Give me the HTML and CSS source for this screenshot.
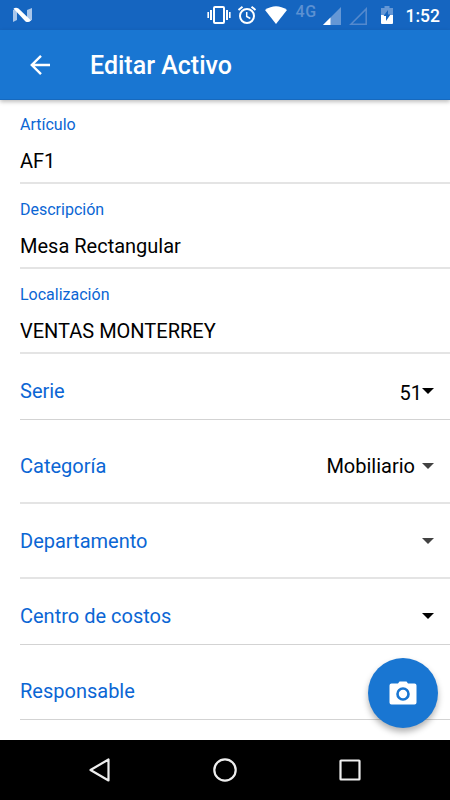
FILE: index.html
```
<!DOCTYPE html>
<html lang="es">
<head>
  <meta charset="UTF-8">
  <meta name="viewport" content="width=device-width, initial-scale=1.0">
  <title>Editar Activo</title>
  <link rel="stylesheet" href="styles.css">
</head>
<body>
  <div class="screen">
    <div class="status-bar">
      <svg class="logo-n" width="20" height="16" viewBox="0 0 20 16">
        <path d="M1 3l4-2v12l-4 2zM15 3l5-2v12l-5 2z" fill="#a9c6ea"/>
        <path d="M1.500 1.500Q4 0 6.500 1.500L19 13.500Q16.500 16 13.500 14.500z" fill="#fff"/>
      </svg>
      <div class="status-icons">
        <svg width="24" height="20" viewBox="0 0 24 20" fill="none" stroke="#fff">
          <rect x="7" y="2" width="10" height="16" rx="1" stroke-width="2"/>
          <path d="M4 5v10M20 5v10" stroke-width="2"/>
          <path d="M1.200 7v6M22.800 7v6" stroke-width="1.600"/>
        </svg>
        <svg class="alarm" width="20" height="20" viewBox="0 0 20 20" fill="none" stroke="#fff">
          <circle cx="10" cy="11" r="7" stroke-width="2"/>
          <path d="M1.500 5L5.500 1.800M18.500 5l-4-3.200" stroke-width="2"/>
          <path d="M9.700 7v4.500l3.600 2" stroke-width="1.500"/>
        </svg>
        <svg class="wifi" width="24" height="20" viewBox="0 0 24 20">
          <path d="M1 5Q12-2.500 23 5L12 19z" fill="#fff"/>
        </svg>
        <span class="network">4G</span>
        <svg class="signal" width="18" height="18" viewBox="0 0 18 18">
          <path d="M0 18L18 0v18z" fill="#6597d5"/>
          <path d="M0 18l7.500-7.500V18z" fill="#fff"/>
        </svg>
        <svg class="signal-empty" width="18" height="18" viewBox="0 0 18 18">
          <path d="M1.900 17.200L17.200 1.900v15.300z" fill="none" stroke="#5489cd" stroke-width="1.600"/>
        </svg>
        <svg class="battery" width="12" height="18" viewBox="0 0 12 18">
          <path d="M0 2h3.500V0h5v2H12v8H0z" fill="#6597d5"/>
          <path d="M0 9h12v8q0 1-1 1H1q-1 0-1-1z" fill="#fff"/>
          <path d="M7 4v4.500h2.500L5 15v-5H2.500z" fill="#1565c0"/>
        </svg>
        <span class="clock">1:52</span>
      </div>
    </div>

    <header class="app-bar">
      <svg class="back" width="20" height="20" viewBox="0 0 20 20" fill="none" stroke="#fff" stroke-width="2.400">
        <path d="M20 10H2M11 .9L1.800 10l9.200 9.100"/>
      </svg>
      <h1>Editar Activo</h1>
    </header>

    <main class="form">
      <div class="field first">
        <label>Artículo</label>
        <div class="value">AF1</div>
      </div>
      <div class="field">
        <label>Descripción</label>
        <div class="value">Mesa Rectangular</div>
      </div>
      <div class="field">
        <label>Localización</label>
        <div class="value">VENTAS MONTERREY</div>
      </div>
      <div class="select-row serie">
        <span class="select-label">Serie</span>
        <span class="select-value">51</span>
        <span class="caret"></span>
      </div>
      <div class="select-row categoria">
        <span class="select-label">Categoría</span>
        <span class="select-value">Mobiliario</span>
        <span class="caret gray"></span>
      </div>
      <div class="select-row departamento">
        <span class="select-label">Departamento</span>
        <span class="caret gray"></span>
      </div>
      <div class="select-row costos">
        <span class="select-label">Centro de costos</span>
        <span class="caret"></span>
      </div>
      <div class="select-row responsable">
        <span class="select-label">Responsable</span>
      </div>
    </main>

    <button class="fab" aria-label="Tomar foto">
      <svg width="28" height="24" viewBox="0 0 28 24">
        <path d="M2.500 2.500H9L10.500.5h7L19 2.500h6.500q2 0 2 2v17q0 2-2 2h-23q-2 0-2-2v-17q0-2 2-2z" fill="#fff"/>
        <circle cx="14" cy="13" r="5.500" fill="#fff" stroke="#1976d2" stroke-width="2.600"/>
      </svg>
    </button>

    <nav class="nav-bar">
      <svg width="24" height="26" viewBox="0 0 24 26">
        <path d="M20.500 2.500v21L2.500 13z"/>
      </svg>
      <svg width="24" height="26" viewBox="0 0 24 26">
        <circle cx="12" cy="13" r="10.700"/>
      </svg>
      <svg width="24" height="26" viewBox="0 0 24 26">
        <rect x="2.500" y="3.500" width="19" height="19" rx=".5"/>
      </svg>
    </nav>
  </div>
</body>
</html>
```

FILE: styles.css
```
* {
  margin: 0;
  padding: 0;
  box-sizing: border-box;
}

body {
  font-family: Roboto, 'Open Sans', sans-serif;
  background: #fff;
  color: #000;
}

.screen {
  position: relative;
  display: flex;
  flex-direction: column;
  width: 450px;
  height: 800px;
  overflow: hidden;
}

.status-bar {
  display: flex;
  justify-content: space-between;
  height: 30px;
  padding: 5px 10px 0 12px;
  background: #1565c0;
  color: #fff;
}

.logo-n {
  margin-top: 2px;
}

.status-icons {
  display: flex;
  align-items: flex-start;
}

.alarm {
  margin-left: 6px;
}

.wifi {
  margin-left: 7px;
}

.network {
  width: 22px;
  margin-left: 8px;
  font-size: 16px;
  font-weight: 500;
  line-height: 13px;
  letter-spacing: 0.5px;
  color: #5c91d2;
}

.signal {
  margin: 2px 0 0 5px;
}

.signal-empty {
  margin: 2px 0 0 8px;
}

.battery {
  margin: 1px 0 0 14px;
}

.clock {
  margin-left: 13px;
  font-size: 17.5px;
  font-weight: 500;
  line-height: 22px;
}

.app-bar {
  position: relative;
  display: flex;
  align-items: center;
  height: 70px;
  padding-left: 30px;
  background: #1976d2;
  border-bottom: 1px solid #1669be;
  color: #fff;
  box-shadow: 0 2px 4px rgba(0, 0, 0, 0.25);
}

.app-bar .back {
  margin-top: 1px;
}

.app-bar h1 {
  margin: 3px 0 0 40px;
  font-size: 25px;
  font-weight: 500;
  line-height: 30px;
}

.form {
  flex: 1;
  padding-left: 20px;
}

.field {
  height: 85px;
  padding-top: 16px;
  border-bottom: 2px solid #e4e4e4;
}

.field.first {
  height: 84px;
  padding-top: 15px;
}

.field label {
  display: block;
  font-size: 16px;
  line-height: 20px;
  color: #0b66d4;
}

.value {
  margin-top: 14px;
  font-size: 20px;
  line-height: 25px;
}

.select-row {
  display: flex;
  align-items: flex-start;
  padding-right: 16px;
  border-bottom: 1px solid #d3d3d3;
  font-size: 20px;
  line-height: 26px;
}

.select-label {
  flex: 1;
  color: #0b66d4;
}

.serie {
  height: 66px;
  padding-top: 24px;
}

.serie .select-value {
  margin-top: 2px;
}

.categoria {
  height: 84px;
  padding-top: 33px;
  border-bottom: 2px solid #e4e4e4;
}

.categoria .select-value {
  margin-right: 7px;
}

.departamento {
  height: 75px;
  padding-top: 24px;
  border-bottom: 2px solid #e4e4e4;
}

.costos {
  height: 66px;
  padding-top: 24px;
}

.responsable {
  height: 75px;
  padding-top: 33px;
}

.caret {
  width: 12px;
  height: 6px;
  margin-top: 10px;
  background: #000;
  clip-path: polygon(0 0, 100% 0, 50% 100%);
}

.caret.gray {
  background: #424242;
}

/* floating camera button */
.fab {
  position: absolute;
  right: 12.5px;
  bottom: 72.5px;
  display: flex;
  align-items: center;
  justify-content: center;
  width: 70px;
  height: 70px;
  border: none;
  border-radius: 50%;
  background: #1976d2;
  box-shadow: 0 4px 6px rgba(0, 0, 0, 0.3);
}

.nav-bar {
  position: relative;
  display: flex;
  align-items: center;
  justify-content: space-between;
  height: 60px;
  padding: 0 88px;
  background: #000;
}

.nav-bar svg {
  fill: none;
  stroke: #eee;
  stroke-width: 2.2;
  stroke-linejoin: round;
}
```
